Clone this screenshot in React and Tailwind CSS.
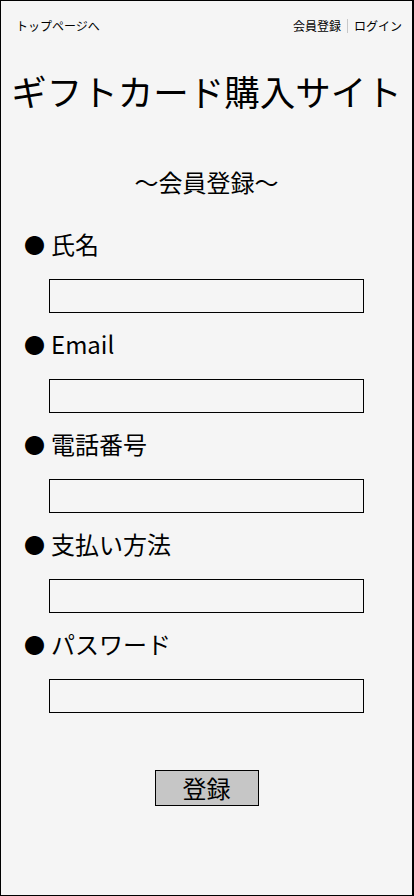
import React from "react";

const fields = [
    { label: "氏名", type: "text" },
    { label: "Email", type: "email" },
    { label: "電話番号", type: "tel" },
    { label: "支払い方法", type: "text" },
    { label: "パスワード", type: "password" },
];

export default function App() {
    return (
        <div
            className="h-[896px] w-full border border-r-2 border-black bg-[#f5f5f5] text-black"
            style={{ fontFamily: '"Noto Sans CJK JP", "Noto Sans", sans-serif' }}
        >
            <div className="flex justify-between pt-[17px] pl-[15px] pr-[10px] text-[12px] leading-4">
                <a href="#">トップページへ</a>
                <div className="flex items-center">
                    <a href="#">会員登録</a>
                    <span className="mx-[6px] h-[14px] w-px bg-[#c8c8c8]" />
                    <a href="#">ログイン</a>
                </div>
            </div>

            <h1 className="mt-[32px] text-center text-[35.5px] leading-[50px]">ギフトカード購入サイト</h1>

            <h2 className="mt-[49px] text-center text-[24px] leading-[34px]">〜会員登録〜</h2>

            <form className="mt-[28px] flex flex-col" onSubmit={(e) => e.preventDefault()}>
                {fields.map((f, i) => (
                    <div key={f.label} className={i === 0 ? "" : "mt-[14px]"}>
                        <label className="flex h-[34px] items-center gap-[6px] pl-[23px] text-[24px] leading-[34px]">
                            <span className="text-[21px] leading-[34px]">●</span>
                            <span>{f.label}</span>
                        </label>
                        <input
                            type={f.type}
                            className="mt-[18px] ml-12 block h-[34px] w-[315px] border border-black bg-transparent outline-none"
                        />
                    </div>
                ))}
                <div className="mt-[57px] flex justify-center">
                    <button
                        type="submit"
                        className="h-[36px] w-[104px] border border-black bg-[#c6c6c6] text-[24px] leading-[34px]"
                    >
                        登録
                    </button>
                </div>
            </form>
        </div>
    );
}
